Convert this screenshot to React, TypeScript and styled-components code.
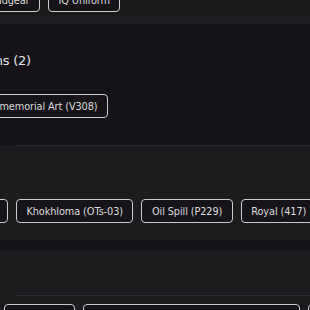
import React from "react";
import styled, { createGlobalStyle } from "styled-components";

const Global = createGlobalStyle`
  html, body { margin: 0; padding: 0; background: #151317; overflow: hidden; }
  body { font-family: "DejaVu Sans", "Noto Sans", sans-serif; }
  #root { width: 310px; height: 310px; overflow: hidden; }
`;

const Page = styled.div`
  display: flex;
  flex-direction: column;
  width: 310px;
`;

const Card = styled.section<{ $top?: number; $pb?: number }>`
  background: #1c1b1e;
  display: flex;
  flex-direction: column;
  margin-top: ${(p) => p.$top ?? 0}px;
  padding-bottom: ${(p) => p.$pb ?? 0}px;
`;

const TopCard = styled(Card)`
  background: #1c1a1b;
`;

const Footer = styled.div`
  height: 8px;
  background: #1e1d21;
`;

const Plain = styled.section`
  display: flex;
  flex-direction: column;
  padding: 27px 0 27px;
`;

const Divider = styled.div<{ $mt?: number }>`
  margin-left: 16px;
  margin-top: ${(p) => p.$mt ?? 0}px;
  height: 1px;
  background: #2c2b2f;
`;

const Row = styled.div<{ $lead: number; $mt?: number }>`
  display: flex;
  gap: 8px;
  padding-left: ${(p) => p.$lead}px;
  margin-top: ${(p) => p.$mt ?? 0}px;
  white-space: nowrap;
`;

const Lead = styled.div`
  width: 0;
  display: flex;
  justify-content: flex-end;
  flex-shrink: 0;
`;

const Chip = styled.span`
  box-sizing: border-box;
  height: 24px;
  display: inline-flex;
  align-items: center;
  flex-shrink: 0;
  padding: 0 9.5px;
  border: 1.5px solid #cbcacd;
  border-radius: 4px;
  background: #161418;
  color: #dcdbde;
  font-size: 9.75px;
  letter-spacing: -0.1px;
  white-space: nowrap;
`;

const Heading = styled.h2`
  margin: 0;
  font-size: 13px;
  line-height: 20px;
  font-weight: 500;
  letter-spacing: -0.2px;
  color: #e6e5e8;
  white-space: nowrap;
`;

export default function App() {
  return (
    <>
      <Global />
      <Page>
        <TopCard $top={-12} $pb={4}>
          <Row $lead={40}>
            <Lead>
              <Chip>Headgear</Chip>
            </Lead>
            <Chip>IQ Uniform</Chip>
          </Row>
        </TopCard>
        <Footer />
        <Plain>
          <Row $lead={31}>
            <Lead>
              <Heading>Decorations (2)</Heading>
            </Lead>
          </Row>
          <Row $lead={108} $mt={23}>
            <Lead>
              <Chip>Commemorial Art (V308)</Chip>
            </Lead>
          </Row>
        </Plain>
        <Card $pb={17}>
          <Divider />
          <Row $lead={8} $mt={53}>
            <Lead>
              <Chip>Tiger (T12)</Chip>
            </Lead>
            <Chip>Khokhloma (OTs-03)</Chip>
            <Chip>Oil Spill (P229)</Chip>
            <Chip>Royal (417)</Chip>
          </Row>
        </Card>
        <Card $top={10}>
          <Divider $mt={45} />
          <Row $lead={75} $mt={8}>
            <Lead>
              <Chip>Arctic (A1)</Chip>
            </Lead>
            <Chip>Woodland Digital Camouflage (W-2018A)</Chip>
            <Chip>Desert</Chip>
          </Row>
        </Card>
      </Page>
    </>
  );
}
